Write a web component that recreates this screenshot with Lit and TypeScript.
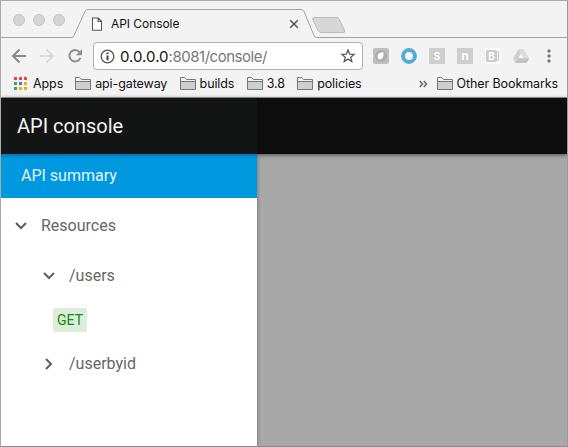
import { LitElement, html, svg, css } from "lit";
import { customElement, property } from "lit/decorators.js";

const folder = html`<svg width="17" height="15" viewBox="0 0 17 15">
  <path d="M.5 13.500V1.500H4.500L6.500 3.500H15.500V13.500Z" fill="#f1f1f1" stroke="#777" stroke-width="1"/>
  <path d="M1 6H15V13H1Z" fill="#cfcfcf"/><path d="M.5 5.500H15.500" stroke="#777"/>
</svg>`;

@customElement("folder-link")
class FolderLink extends LitElement {
  @property() label = "";
  static styles = css`
    :host { display: flex; align-items: center; flex: none; white-space: nowrap; }
    svg { display: block; margin-right: 3px; flex: none; }
  `;
  render() { return html`${folder}<span>${this.label}</span>`; }
}

@customElement("browser-tabs")
class BrowserTabs extends LitElement {
  static styles = css`
    :host { display: grid; height: 37px; font-size: 12px; color: #111; }
    .shape, .content { grid-area: 1 / 1; display: block; }
    .content { display: flex; align-items: center; padding: 9px 0 0 90px; height: 28px; }
    .title { width: 177px; margin-left: 8px; letter-spacing: -.06px; padding-bottom: 1px; }
    .page, .close { display: block; }
  `;
  render() {
    return html`
      <svg class="shape" width="566" height="37" viewBox="1 1 566 37">
        ${[19, 39, 59].map(x => svg`<circle cx=${x} cy="20" r="5.5" fill="#d5d5d5" stroke="#c4c4c4"/>`)}
        <path d="M1 37.500H72Q73 37.500 74 35.500L85 11.500Q86 9.500 88 9.500H301Q303 9.500 304 11.500L314 35.500Q315 37.500 317 37.500H567" fill="none" stroke="#a4a4a4"/>
        <path d="M314 17.500H336Q338.500 17.500 339.500 19.500L344.500 30.500Q345.500 32.500 343 32.500H321Q319 32.500 318 30.500L312.800 19.500Q312 17.500 314 17.500Z" fill="#d7d7d7" stroke="#bbb"/>
      </svg>
      <div class="content">
        <svg class="page" width="12" height="15" viewBox="0 0 12 15"><path d="M1.500 1H7.300L10.500 4.300V13.300H1.500ZM7.100 1V4.500H10.500" fill="#fff" stroke="#555" stroke-width="1.100"/></svg>
        <span class="title">API Console</span>
        <svg class="close" width="12" height="12" viewBox="0 0 12 12"><path d="M2.200 2.200L9.800 9.800M9.800 2.200L2.200 9.800" stroke="#555" stroke-width="1.500"/></svg>
      </div>`;
  }
}

@customElement("browser-toolbar")
class BrowserToolbar extends LitElement {
  static styles = css`
    :host { display: flex; height: 36px; align-items: center; box-sizing: border-box; padding: 0 0 0 10px; }
    svg { display: block; flex: none; }
    .address { display: flex; align-items: center; box-sizing: border-box; width: 270px; height: 28px; margin-left: 9px; padding: 0 6px; border: 1px solid #b2b2b2; border-radius: 4px; background: #fff; font-size: 15px; color: #111; }
    .url { flex: 1; margin-left: 5px; white-space: nowrap; letter-spacing: 0; }
    .rest { color: #777; letter-spacing: -.47px; }
    .extensions { display: flex; gap: 12px; margin-left: 10px; }
    .more { margin-left: 18px; }
    .letter { font: bold 12px Inter, sans-serif; fill: #fff; text-anchor: middle; }
    .small { font-size: 10px; }
  `;
  render() {
    return html`
      <svg width="73" height="18" viewBox="11 47 73 18" fill="none">
        <path d="M26 56H13M19.500 49.500L13 56L19.500 62.500" stroke="#888" stroke-width="1.900"/>
        <path d="M40 56H53M46.500 49.500L53 56L46.500 62.500" stroke="#d8d8d8" stroke-width="1.900"/>
        <path d="M79.600 52.200A5.700 5.700 0 1 0 80.400 57.800" stroke="#909090" stroke-width="2"/>
        <path d="M82 49V55.200H75.800Z" fill="#909090"/>
      </svg>
      <div class="address">
        <svg width="15" height="15" viewBox="0 0 15 15"><circle cx="7.500" cy="7.500" r="6.300" fill="none" stroke="#555" stroke-width="1.300"/><path d="M6.500 6.400H8.500V11.300H6.500ZM6.500 3.400H8.500V5.200H6.500Z" fill="#444"/></svg>
        <span class="url">0.0.0.0<span class="rest">:8081/console/</span></span>
        <svg width="16" height="16" viewBox="0 0 16 16"><path d="M8 2L9.700 6.100L14.100 6.400L10.700 9.200L11.800 13.500L8 11.100L4.200 13.500L5.300 9.200L1.900 6.400L6.300 6.100Z" fill="none" stroke="#5a5a5a" stroke-width="1.300"/></svg>
      </div>
      <div class="extensions">
        <svg width="16" height="16"><rect width="16" height="16" rx="2" fill="#bebebe"/><circle cx="8" cy="8" r="6" fill="#adadad"/><path d="M5 11Q3 4.500 10.300 4Q11.500 10.500 7 11.500Z" fill="#fff"/></svg>
        <svg width="16" height="16"><circle cx="8" cy="8" r="5.900" fill="#f7f7f7" stroke="#55abd8" stroke-width="4"/></svg>
        <svg width="16" height="16"><rect width="16" height="16" fill="#cecece"/><text class="letter small" x="8" y="11.700">S</text></svg>
        <svg width="16" height="16"><rect width="16" height="16" fill="#cecece"/><text class="letter" x="8" y="12">n</text></svg>
        <svg width="16" height="16"><rect width="16" height="16" fill="#fafafa"/><rect x="1" y="2" width="11" height="12" rx="1.500" fill="#cbcbcb"/><path d="M13.500 3V13" stroke="#d0d0d0" stroke-width="1.500"/><text class="letter small" x="6.600" y="11.600">B</text></svg>
        <svg width="16" height="16"><path d="M5.500 1H10.500L16 10.500L13.500 15H2.500L0 10.500Z" fill="#d1d1d1"/><path d="M5.500 1L10.500 10.500H16L10.500 1Z" fill="#dcdcdc"/><path d="M2.500 15L5 10.500H16L13.500 15Z" fill="#c2c2c2"/><path d="M8 5.600L10.700 10.300H5.300Z" fill="#f5f5f5"/></svg>
      </div>
      <svg class="more" width="4" height="16"><g fill="#777"><circle cx="2" cy="3" r="1.650"/><circle cx="2" cy="8" r="1.650"/><circle cx="2" cy="13" r="1.650"/></g></svg>`;
  }
}

@customElement("bookmark-bar")
class BookmarkBar extends LitElement {
  static styles = css`
    :host { display: flex; height: 19px; align-items: center; padding-left: 13px; font-size: 12.500px; letter-spacing: -.1px; color: #111; }
    .apps { display: block; margin-right: 6px; }
    .list { display: flex; gap: 12.300px; margin-left: 12px; flex: 1; }
    .overflow { display: block; margin-right: 9px; }
    .other { margin-right: 9px; }
  `;
  render() {
    const colors = ["#e8453c", "#e8453c", "#e8453c", "#35a853", "#367cf0", "#f4ac13", "#35a853", "#f4ac13", "#f4ac13"];
    return html`
      <svg class="apps" width="13" height="13">${colors.map((c, i) => svg`<rect x=${(i % 3) * 5} y=${Math.floor(i / 3) * 5} width="3" height="3" fill=${c}/>`)}</svg>
      <span>Apps</span>
      <div class="list">${["api-gateway", "builds", "3.8", "policies"].map(l => html`<folder-link .label=${l}></folder-link>`)}</div>
      <svg class="overflow" width="9" height="8"><path d="M.8 1L3.500 4L.8 7M4.800 1L7.500 4L4.800 7" fill="none" stroke="#666" stroke-width="1.500"/></svg>
      <folder-link class="other" .label=${"Other Bookmarks"}></folder-link>`;
  }
}

@customElement("console-page")
class ConsolePage extends LitElement {
  static styles = css`
    :host { display: flex; flex: 1; min-height: 0; background: #a8a8a8; font-family: Roboto, sans-serif; font-size: 16px; color: #666; }
    .drawer { width: 256px; flex: none; background: #fff; box-shadow: 0 0 4px rgba(0,0,0,.4); z-index: 1; }
    .header { height: 56px; box-sizing: border-box; padding-left: 16px; display: flex; align-items: center; background: #131514; color: #f4f4f4; font-size: 20px; }
    .summary { height: 44px; box-sizing: border-box; padding: 0 0 2px 20px; display: flex; align-items: center; background: linear-gradient(#0073a9, #008acb 2px, #0098de 5px, #0098df); color: #e1f4fd; }
    .node { display: flex; align-items: center; height: 50px; gap: 14px; }
    .node span { padding-bottom: 2px; }
    .root { height: 56px; padding-left: 14px; }
    .child { height: 44px; padding-left: 42px; }
    .chevron { display: block; width: 12px; height: 12px; flex: none; }
    .method { width: 34px; height: 24px; margin: 10px 0 10px 52px; display: flex; align-items: center; justify-content: center; border-radius: 2px; background: #dcedda; color: #128712; font-size: 14px; }
    .main { flex: 1; }
    .band { height: 56px; background: #0e0e0e; box-shadow: 0 1px 4px rgba(0,0,0,.55); }
  `;
  chevron(open: boolean) {
    return html`<svg class="chevron" viewBox="0 0 12 12"><path d=${open ? "M1 3L6 8L11 3" : "M3 1L8 6L3 11"} fill="none" stroke="#606060" stroke-width="2.100"/></svg>`;
  }
  render() {
    return html`
      <div class="drawer">
        <div class="header">API console</div>
        <div class="summary">API summary</div>
        <div class="node root">${this.chevron(true)}<span>Resources</span></div>
        <div class="node child">${this.chevron(true)}<span>/users</span></div>
        <div class="method">GET</div>
        <div class="node child">${this.chevron(false)}<span>/userbyid</span></div>
      </div>
      <div class="main"><div class="band"></div></div>`;
  }
}

@customElement("app-root")
class AppRoot extends LitElement {
  static styles = css`
    :host { display: flex; flex-direction: column; box-sizing: border-box; width: 568px; height: 447px; overflow: hidden; border: 1px solid #aaa; border-bottom-color: #888; border-right-color: #999; background: #f3f3f3; font-family: Inter, sans-serif; }
    .chrome { height: 97px; box-sizing: border-box; flex: none; border-bottom: 1px solid #999; }
  `;
  render() {
    return html`
      <div class="chrome"><browser-tabs></browser-tabs><browser-toolbar></browser-toolbar><bookmark-bar></bookmark-bar></div>
      <console-page></console-page>`;
  }
}
